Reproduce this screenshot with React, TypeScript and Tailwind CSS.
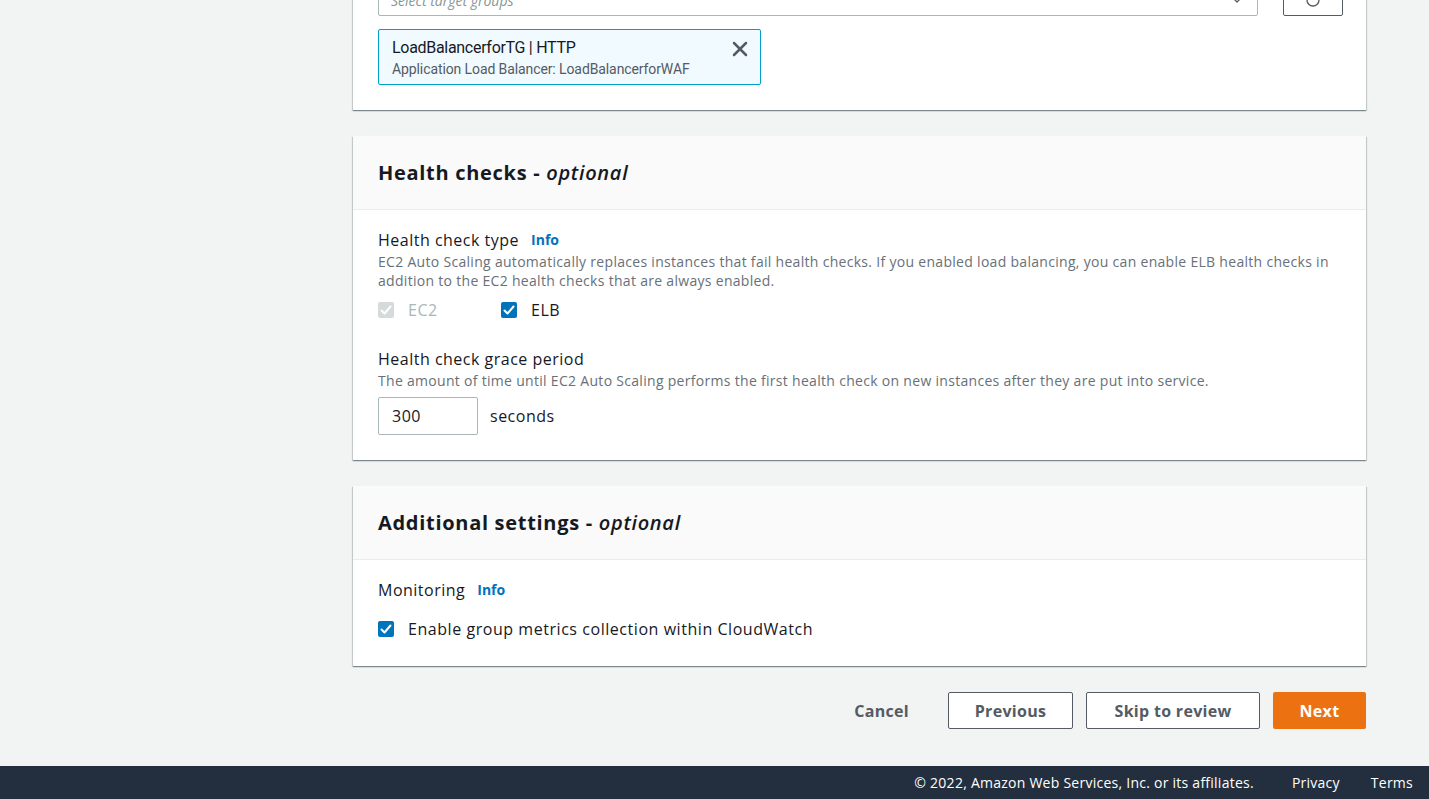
import { ChevronDown, RotateCw, X } from "lucide-react";

const font = { fontFamily: '"Open Sans", "Noto Sans", Arial, sans-serif' };

const Check = ({ disabled }: { disabled?: boolean }) => (
  <span
    className={`flex h-4 w-4 shrink-0 items-center justify-center rounded-[2px] ${
      disabled ? "bg-[#d5dbdb]" : "bg-[#0073bb]"
    }`}
  >
    <svg viewBox="0 0 16 16" className="h-4 w-4" fill="none">
      <path
        d="M3.5 8.5 6.5 11.5 12.5 4.5"
        stroke="#fff"
        strokeWidth="2"
        strokeLinecap="round"
        strokeLinejoin="round"
      />
    </svg>
  </span>
);

const Panel = ({
  title,
  children,
}: {
  title: string;
  children: React.ReactNode;
}) => (
  <section className="mb-[26px] bg-white shadow-[0_1px_1px_0_rgba(0,28,36,0.3),1px_1px_1px_0_rgba(0,28,36,0.15),-1px_1px_1px_0_rgba(0,28,36,0.15)]">
    <div className="flex h-[74px] items-center border-b border-[#eaeded] bg-[#fafafa] px-[25px]">
      <h2 className="text-[20px] font-bold leading-none tracking-[0.7px] text-[#16191f]">
        {title} - <i className="font-semibold">optional</i>
      </h2>
    </div>
    <div className="px-[25px] pt-[19px] pb-[25px]">{children}</div>
  </section>
);

const Label = ({ text, info }: { text: string; info?: boolean }) => (
  <div className="flex items-center gap-3 text-[16px] leading-[22px] tracking-[0.5px] text-[#16191f]">
    <span>{text}</span>
    {info && (
      <span className="text-[14px] font-bold tracking-normal text-[#0073bb]">Info</span>
    )}
  </div>
);

export default function App() {
  return (
    <div
      className="flex h-[799px] w-full flex-col overflow-hidden bg-[#f2f3f3]"
      style={font}
    >
      <div className="ml-[353px] w-[1013px] flex-1">
        {/* cut-off target groups panel */}
        <section className="mt-[-29px] mb-[26px] bg-white pl-[25px] pr-[23px] pt-[13px] pb-[25px] shadow-[0_1px_1px_0_rgba(0,28,36,0.3),1px_1px_1px_0_rgba(0,28,36,0.15),-1px_1px_1px_0_rgba(0,28,36,0.15)]">
          <div className="flex items-center gap-[25px]">
            <div className="flex h-[32px] w-[880px] shrink-0 items-center justify-between rounded-[2px] border border-[#aab7b8] px-3 text-[14px] italic text-[#879596]">
              <span>Select target groups</span>
              <ChevronDown size={16} className="text-[#545b64]" />
            </div>
            <div className="flex h-[32px] w-[60px] shrink-0 items-center justify-center rounded-[2px] border border-[#545b64]">
              <RotateCw size={16} className="text-[#545b64]" />
            </div>
          </div>
          <div
            className="mt-[13px] flex h-[56px] w-[383px] items-start justify-between rounded-[2px] border border-[#00a1c9] bg-[#f1faff] pl-[13px] pr-[8px] pt-[7px]"
            style={{ fontFamily: 'Roboto, "Noto Sans", sans-serif' }}
          >
            <div>
              <div className="text-[16px] leading-[22px] tracking-[-0.3px] text-[#16191f]">
                LoadBalancerforTG | HTTP
              </div>
              <div className="text-[14px] leading-[20px] tracking-[-0.1px] text-[#545b64]">
                Application Load Balancer: LoadBalancerforWAF
              </div>
            </div>
            <X size={24} strokeWidth={2.5} className="text-[#545b64]" />
          </div>
        </section>

        <Panel title="Health checks">
          <Label text="Health check type" info />
          <p className="mt-[1px] text-[14px] leading-[19px] tracking-[0.3px] text-[#687078]">
            EC2 Auto Scaling automatically replaces instances that fail health
            checks. If you enabled load balancing, you can enable ELB health
            checks in addition to the EC2 health checks that are always enabled.
          </p>
          <div className="mt-[8px] flex items-center text-[16px] tracking-[0.5px]">
            <div className="flex w-[123px] items-center gap-[14px] text-[#aab7b8]">
              <Check disabled />
              <span>EC2</span>
            </div>
            <div className="flex items-center gap-[14px] text-[#16191f]">
              <Check />
              <span>ELB</span>
            </div>
          </div>
          <div className="mt-[26px]">
            <Label text="Health check grace period" />
          </div>
          <p className="mt-[1px] text-[14px] leading-[19px] tracking-[0.3px] text-[#687078]">
            The amount of time until EC2 Auto Scaling performs the first health
            check on new instances after they are put into service.
          </p>
          <div className="mt-[7px] flex items-center gap-[12px]">
            <div className="flex h-[38px] w-[100px] items-center rounded-[2px] border border-[#aab7b8] px-[13px] text-[16px] tracking-[0.5px] text-[#16191f]">
              300
            </div>
            <span className="text-[16px] tracking-[0.5px] text-[#16191f]">seconds</span>
          </div>
        </Panel>

        <Panel title="Additional settings">
          <Label text="Monitoring" info />
          <div className="mt-[16px] flex items-center gap-[14px] text-[16px] tracking-[0.55px] text-[#16191f]">
            <Check />
            <span>Enable group metrics collection within CloudWatch</span>
          </div>
        </Panel>

        <div className="flex items-center justify-end gap-[13px] text-[16px] font-bold tracking-[0.3px]">
          <span className="mr-[26px] text-[#545b64]">Cancel</span>
          <button className="h-[37px] w-[125px] rounded-[2px] border border-[#545b64] bg-white text-[#545b64]">
            Previous
          </button>
          <button className="h-[37px] w-[174px] rounded-[2px] border border-[#545b64] bg-white text-[#545b64]">
            Skip to review
          </button>
          <button className="h-[37px] w-[93px] rounded-[2px] bg-[#ec7211] text-white">
            Next
          </button>
        </div>
      </div>

      <footer className="flex h-[33px] items-center justify-end bg-[#232f3e] pr-[16px] text-[14px] tracking-[0.25px] text-white">
        <span>© 2022, Amazon Web Services, Inc. or its affiliates.</span>
        <span className="ml-[38px]">Privacy</span>
        <span className="ml-[31px]">Terms</span>
      </footer>
    </div>
  );
}
